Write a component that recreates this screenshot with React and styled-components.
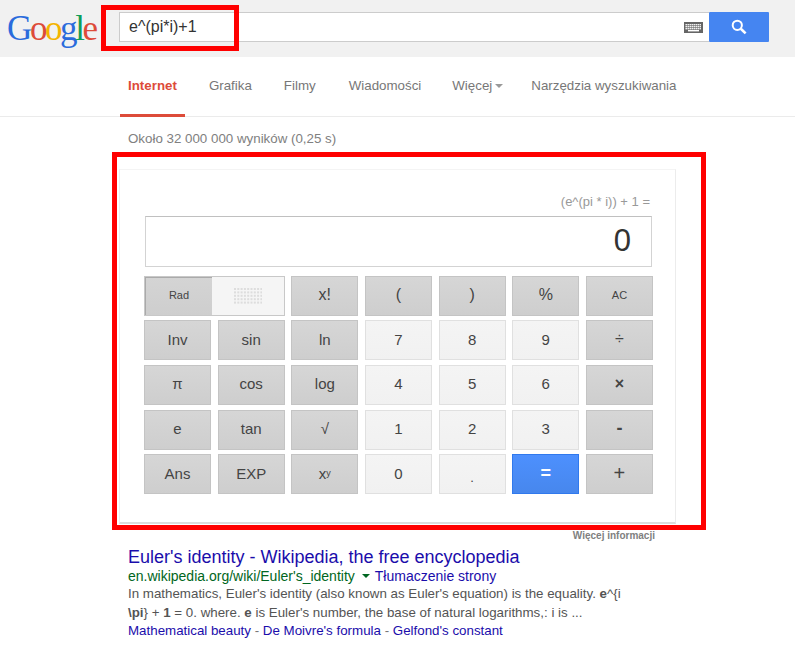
import React from "react";
import styled, { createGlobalStyle } from "styled-components";

const Global = createGlobalStyle`
  html, body { margin: 0; padding: 0; background: #fff; }
  body { font-family: "Liberation Sans", Arial, sans-serif; color: #333; }
`;

const Page = styled.div`
  position: relative;
  width: 795px;
  height: 653px;
  overflow: hidden;
`;

const Header = styled.header`
  display: flex;
  align-items: flex-start;
  height: 57px;
  background: #f1f1f1;
  padding-top: 12px;
  padding-left: 7px;
  box-sizing: border-box;
`;

const Logo = styled.div`
  width: 112px;
  height: 34px;
  font-family: "Liberation Serif", serif;
  font-size: 35px;
  line-height: 33px;
  letter-spacing: -2.4px;
  white-space: nowrap;
`;

const Letter = styled.span`
  color: ${(p) => p.$c};
`;

const SearchBox = styled.div`
  display: flex;
  align-items: center;
  justify-content: space-between;
  width: 590px;
  height: 30px;
  box-sizing: border-box;
  background: #fff;
  border: 1px solid #ccc;
  border-right: none;
  padding: 0 6px 0 9px;
  font-size: 16px;
  color: #333;
`;

const SearchButton = styled.div`
  display: flex;
  align-items: center;
  justify-content: center;
  width: 60px;
  height: 30px;
  background: #4585f1;
  border-radius: 1px;
`;

const Tabs = styled.nav`
  display: flex;
  height: 60px;
  box-sizing: border-box;
  padding-left: 120px;
  border-bottom: 1px solid #ebebeb;
`;

const Tab = styled.div`
  display: flex;
  align-items: center;
  gap: 3px;
  box-sizing: border-box;
  height: 60px;
  padding: 0 ${(p) => (p.$active ? "8px" : "0")} 1px;
  margin-right: ${(p) => p.$gap}px;
  font-size: 13.33px;
  font-weight: ${(p) => (p.$active ? 700 : 400)};
  color: ${(p) => (p.$active ? "#dd4b39" : "#777")};
  border-bottom: 3px solid ${(p) => (p.$active ? "#dd4b39" : "transparent")};
  white-space: nowrap;
`;

const Caret = styled.span`
  width: 0;
  height: 0;
  border-left: 4px solid transparent;
  border-right: 4px solid transparent;
  border-top: 4px solid #999;
  margin-top: 1px;
`;

const Stats = styled.div`
  margin: 14px 0 0 128px;
  height: 16px;
  font-size: 13.33px;
  line-height: 16px;
  color: #808080;
`;

const Card = styled.section`
  box-sizing: border-box;
  width: 557px;
  height: 355px;
  margin: 22px 0 0 119px;
  padding: 24px 23px 0 25px;
  background: #fff;
  border: 1px solid #f4f4f4;
  border-left-color: #eee;
  border-bottom: 2px solid #dcdcdc;
  border-right-color: #ececec;
`;

const Formula = styled.div`
  text-align: right;
  height: 22px;
  padding-right: 2px;
  font-size: 13px;
  line-height: 15px;
  color: #999;
`;

const Display = styled.div`
  box-sizing: border-box;
  width: 507px;
  height: 51px;
  padding-right: 20px;
  border: 1px solid #d3d3d3;
  border-top-color: #c0c0c0;
  text-align: right;
  font-size: 31px;
  line-height: 47px;
  color: #333;
`;

const Keys = styled.div`
  display: grid;
  grid-template-columns: repeat(7, 67px);
  grid-auto-rows: 40px;
  column-gap: 6.67px;
  row-gap: 4.55px;
  margin: 8.9px 0 0 -1px;
`;

const palette = {
  dark: { bg: "linear-gradient(#d6d6d6, #cecece)", border: "#c4c4c4", color: "#444" },
  light: { bg: "linear-gradient(#f4f4f4, #f1f1f1)", border: "#e0e0e0", color: "#444" },
  blue: { bg: "linear-gradient(#4d90fe, #4787ed)", border: "#3079ed", color: "#fff" },
};

const Key = styled.div`
  display: flex;
  align-items: center;
  justify-content: center;
  box-sizing: border-box;
  padding-bottom: ${(p) => p.$lift ?? 2}px;
  padding-top: ${(p) => p.$drop ?? 0}px;
  background: ${(p) => palette[p.$kind].bg};
  border: 1px solid ${(p) => palette[p.$kind].border};
  color: ${(p) => palette[p.$kind].color};
  font-size: ${(p) => p.$size || 15}px;
  font-weight: ${(p) => p.$weight || 400};
`;

const Sup = styled.sup`
  font-size: 9px;
  line-height: 0;
  vertical-align: 4px;
`;

const Toggle = styled.div`
  grid-column: span 2;
  display: flex;
  box-sizing: border-box;
  border: 1px solid #c8c8c8;
  background: #f5f5f5;
`;

const RadPart = styled.div`
  display: flex;
  align-items: center;
  justify-content: center;
  box-sizing: border-box;
  width: 67px;
  padding-bottom: 2px;
  background: linear-gradient(#d4d4d4, #cecece);
  border-left: 1px solid #aaa;
  border-top: 1px solid #aaa;
  font-size: 11px;
  color: #444;
`;

const DegPart = styled.div`
  flex: 1;
  display: flex;
  align-items: center;
  justify-content: center;
`;

const More = styled.div`
  width: 655px;
  margin-top: 5px;
  height: 13px;
  text-align: right;
  font-size: 10px;
  line-height: 13px;
  color: #808080;
  font-weight: 700;
`;

const Result = styled.article`
  margin: 5px 0 0 128px;
  width: 510px;
`;

const Title = styled.div`
  font-size: 18px;
  line-height: 21px;
  color: #1a0dab;
  white-space: nowrap;
`;

const UrlRow = styled.div`
  display: flex;
  align-items: center;
  height: 16px;
  font-size: 14px;
  line-height: 16px;
  color: #006621;
  white-space: nowrap;
`;

const UrlCaret = styled.span`
  width: 0;
  height: 0;
  margin: 0 5px 0 7px;
  border-left: 4px solid transparent;
  border-right: 4px solid transparent;
  border-top: 4px solid #006621;
`;

const Translate = styled.span`
  color: #1a0dab;
`;

const Snippet = styled.div`
  font-size: 13.33px;
  line-height: 19px;
  color: #545454;
  white-space: nowrap;
`;

const Sitelinks = styled.div`
  font-size: 13.33px;
  line-height: 17px;
  color: #777;
  white-space: nowrap;
`;

const SiteLink = styled.span`
  color: #1a0dab;
`;

const RedFrame = styled.div`
  position: absolute;
  box-sizing: border-box;
  left: ${(p) => p.$x}px;
  top: ${(p) => p.$y}px;
  width: ${(p) => p.$w}px;
  height: ${(p) => p.$h}px;
  border: 5px solid #ff0000;
  pointer-events: none;
`;

const KeyboardIcon = () => (
  <svg width="19" height="11" viewBox="0 0 19 11">
    <rect width="19" height="11" fill="#666" />
    {[2, 4, 6].map((y) =>
      Array.from({ length: 8 }, (_, i) => (
        <rect key={`${y}-${i}`} x={1.5 + i * 2} y={y} width="1.4" height="1.4" fill="#fff" />
      ))
    )}
    <rect x="4" y="8" width="11" height="1.4" fill="#fff" />
  </svg>
);

const SearchIcon = () => (
  <svg width="16" height="16" viewBox="0 0 16 16" fill="none">
    <circle cx="6.3" cy="6.3" r="4.6" stroke="#fff" strokeWidth="2" />
    <path d="M9.8 9.8 L14.6 14.4" stroke="#fff" strokeWidth="2.6" />
  </svg>
);

const DotsIcon = () => (
  <svg width="28" height="16" viewBox="0 0 28 16">
    {Array.from({ length: 5 }, (_, r) =>
      Array.from({ length: 9 }, (_, c) => (
        <rect key={`${r}-${c}`} x={c * 3.3} y={r * 3.4} width="2" height="2" fill="#ddd" />
      ))
    )}
  </svg>
);

const rows = [
  [["x!", "dark", 16], ["(", "dark", 16], [")", "dark", 16], ["%", "dark", 16], ["AC", "dark", 11]],
  [["Inv", "dark"], ["sin", "dark"], ["ln", "dark"], ["7", "light"], ["8", "light"], ["9", "light"], ["÷", "dark", 16]],
  [["π", "dark"], ["cos", "dark"], ["log", "dark"], ["4", "light"], ["5", "light"], ["6", "light"], ["×", "dark", 16, 700]],
  [["e", "dark"], ["tan", "dark"], ["√", "dark"], ["1", "light"], ["2", "light"], ["3", "light"], ["-", "dark", 18, 700]],
  [["Ans", "dark"], ["EXP", "dark"], ["xy", "dark"], ["0", "light"], [".", "light", 13, 400, 0, 6], ["=", "blue", 18, 700], ["+", "dark", 20]],
];

const tabs = [
  ["Internet", 24, true],
  ["Grafika", 32],
  ["Filmy", 33],
  ["Wiadomości", 31],
];

export default function App() {
  return (
    <Page>
      <Global />
      <Header>
        <Logo>
          <Letter $c="#2a6bdc">G</Letter>
          <Letter $c="#dd4b39">o</Letter>
          <Letter $c="#f4b400">o</Letter>
          <Letter $c="#2a6bdc">g</Letter>
          <Letter $c="#0f9d58">l</Letter>
          <Letter $c="#dd4b39">e</Letter>
        </Logo>
        <SearchBox>
          e^(pi*i)+1
          <KeyboardIcon />
        </SearchBox>
        <SearchButton>
          <SearchIcon />
        </SearchButton>
      </Header>
      <Tabs>
        {tabs.map(([label, gap, active]) => (
          <Tab key={label} $gap={gap} $active={active}>{label}</Tab>
        ))}
        <Tab $gap={28}>Więcej <Caret /></Tab>
        <Tab $gap={0}>Narzędzia wyszukiwania</Tab>
      </Tabs>
      <Stats>Około 32 000 000 wyników (0,25 s)</Stats>
      <Card>
        <Formula>(e^(pi * i)) + 1 =</Formula>
        <Display>0</Display>
        <Keys>
          <Toggle>
            <RadPart>Rad</RadPart>
            <DegPart><DotsIcon /></DegPart>
          </Toggle>
          {rows.flat().map(([label, kind, size, weight, lift, drop]) => (
            <Key key={label} $kind={kind} $size={size} $weight={weight} $lift={lift} $drop={drop}>
              {label === "xy" ? <>x<Sup>y</Sup></> : label}
            </Key>
          ))}
        </Keys>
      </Card>
      <More>Więcej informacji</More>
      <Result>
        <Title>Euler's identity - Wikipedia, the free encyclopedia</Title>
        <UrlRow>
          en.wikipedia.org/wiki/Euler's_identity
          <UrlCaret />
          <Translate>Tłumaczenie strony</Translate>
        </UrlRow>
        <Snippet>
          In mathematics, Euler's identity (also known as Euler's equation) is the equality. <b>e</b>^{"{"}i
          <br />
          <b>\pi</b>{"}"} + <b>1</b> = 0. where. <b>e</b> is Euler's number, the base of natural logarithms,: i is ...
        </Snippet>
        <Sitelinks>
          <SiteLink>Mathematical beauty</SiteLink> - <SiteLink>De Moivre's formula</SiteLink> - <SiteLink>Gelfond's constant</SiteLink>
        </Sitelinks>
      </Result>
      <RedFrame $x={101} $y={5} $w={138} $h={46} />
      <RedFrame $x={112} $y={152} $w={594} $h={378} />
    </Page>
  );
}
